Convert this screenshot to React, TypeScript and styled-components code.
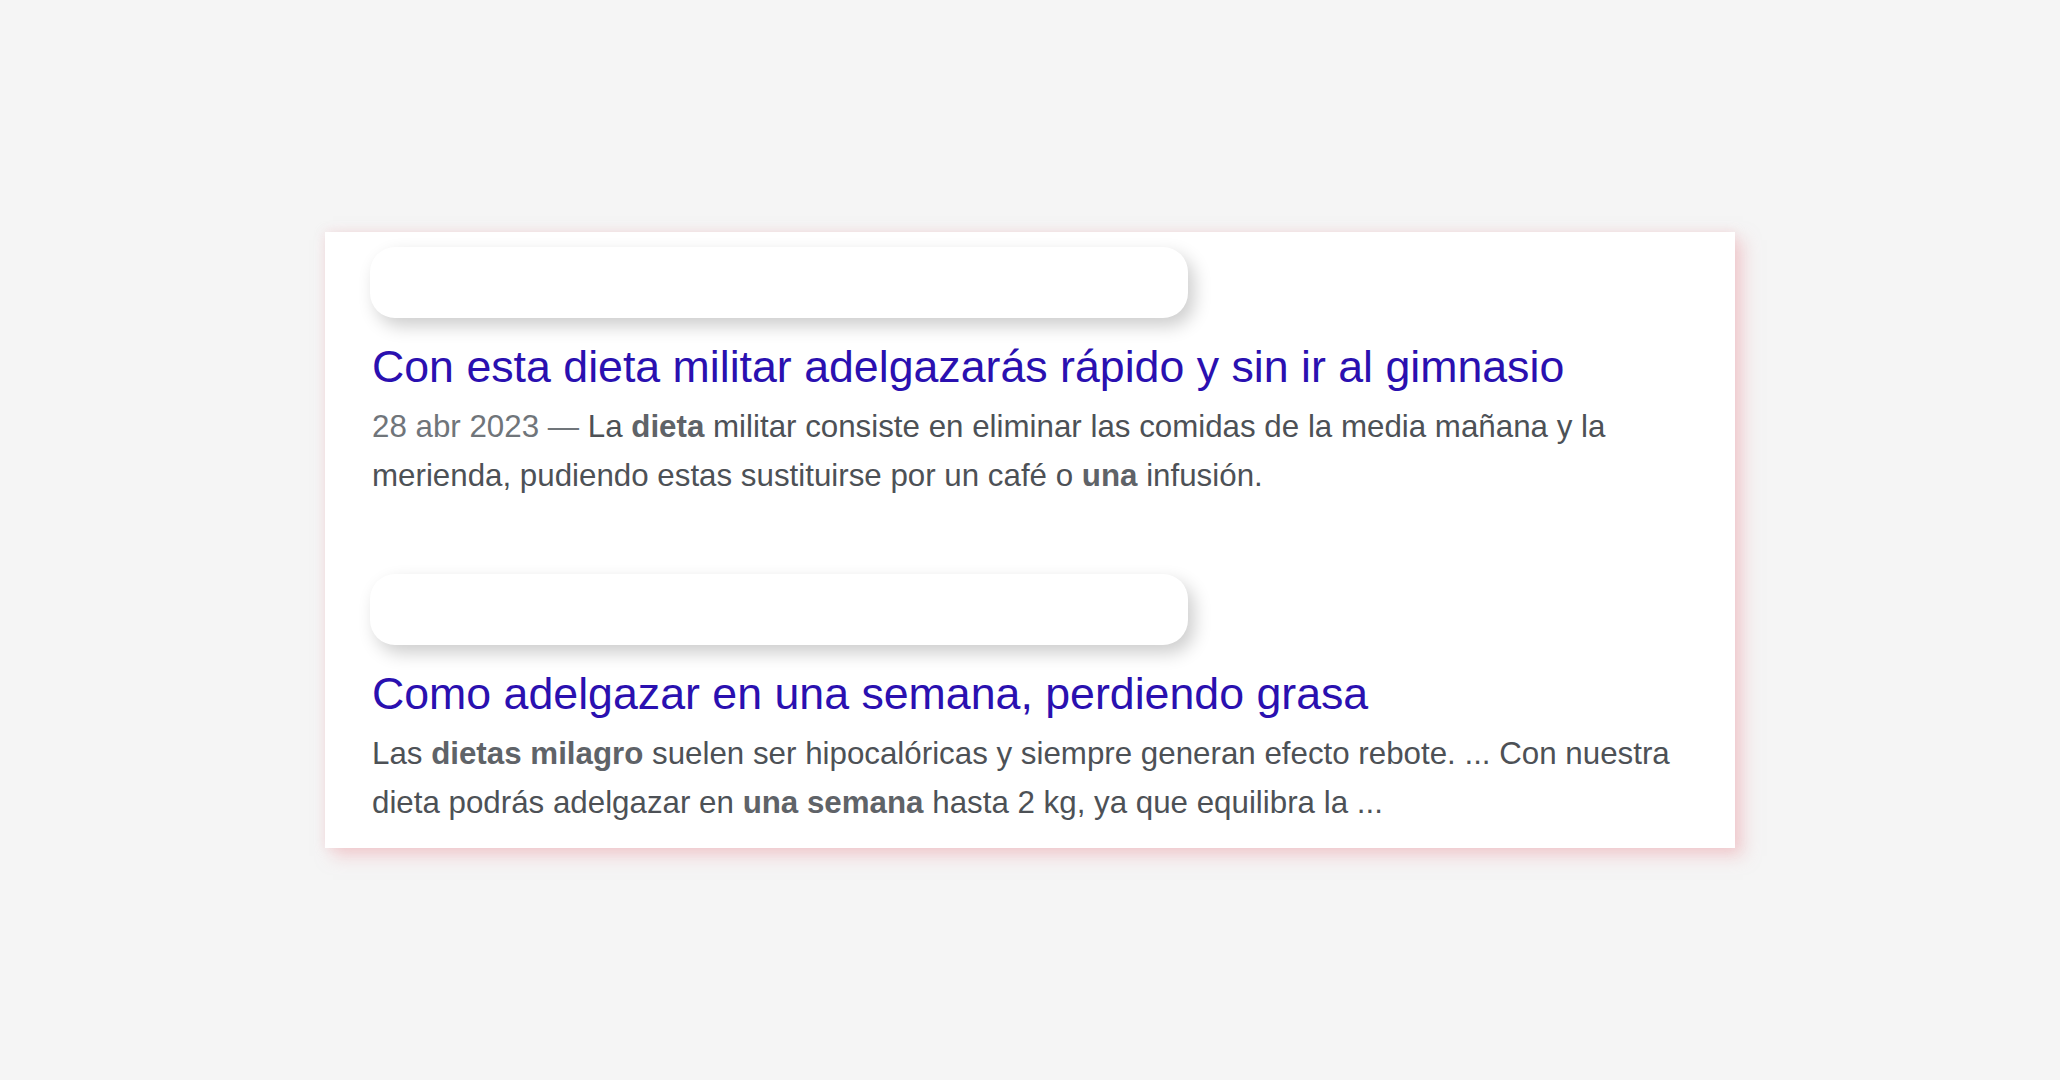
import styled, { createGlobalStyle } from "styled-components";

const GlobalStyle = createGlobalStyle`
  * { box-sizing: border-box; }
  body {
    margin: 0;
    background: #f5f5f5;
    font-family: "Liberation Sans", Arial, sans-serif;
  }
`;

type Part = { text: string; bold?: boolean };

type Result = {
  title: string;
  date?: string;
  snippet: Part[];
};

const results: Result[] = [
  {
    title: "Con esta dieta militar adelgazarás rápido y sin ir al gimnasio",
    date: "28 abr 2023 — ",
    snippet: [
      { text: "La " },
      { text: "dieta", bold: true },
      { text: " militar consiste en eliminar las comidas de la media mañana y la merienda, pudiendo estas sustituirse por un café o " },
      { text: "una", bold: true },
      { text: " infusión." },
    ],
  },
  {
    title: "Como adelgazar en una semana, perdiendo grasa",
    snippet: [
      { text: "Las " },
      { text: "dietas milagro", bold: true },
      { text: " suelen ser hipocalóricas y siempre generan efecto rebote. ... Con nuestra dieta podrás adelgazar en " },
      { text: "una semana", bold: true },
      { text: " hasta 2 kg, ya que equilibra la ..." },
    ],
  },
];

export default function App() {
  return (
    <>
      <GlobalStyle />
      <Page>
        <Card>
          {results.map((r) => (
            <ResultItem key={r.title}>
              <Pill />
              <Title href="#">{r.title}</Title>
              <Snippet>
                {r.date && <DateText>{r.date}</DateText>}
                {r.snippet.map((p, i) =>
                  p.bold ? <Em key={i}>{p.text}</Em> : <span key={i}>{p.text}</span>
                )}
              </Snippet>
            </ResultItem>
          ))}
        </Card>
      </Page>
    </>
  );
}

const Page = styled.main`
  display: flex;
  justify-content: center;
  align-items: center;
  min-height: 100vh;
`;

const Card = styled.section`
  display: flex;
  flex-direction: column;
  gap: 74px;
  width: 1410px;
  padding: 15px 43px 21px 45px;
  background: #fff;
  box-shadow: 8px 8px 16px rgba(238, 170, 176, 0.5), 0 0 10px rgba(238, 190, 194, 0.35);
`;

const ResultItem = styled.article`
  display: flex;
  flex-direction: column;
`;

const Pill = styled.div`
  width: 818px;
  height: 71px;
  border-radius: 25px;
  background: #fff;
  box-shadow: 6px 8px 18px rgba(0, 0, 0, 0.2);
`;

const Title = styled.a`
  display: block;
  margin: 20px 0 0 2px;
  font-size: 44.7px;
  line-height: 58px;
  color: #2a10b0;
  text-decoration: none;
  white-space: nowrap;
`;

const Snippet = styled.p`
  margin: 6px 0 0 2px;
  font-size: 31.3px;
  line-height: 49px;
  color: #4d5156;
`;

const DateText = styled.span`
  color: #70757a;
`;

const Em = styled.b`
  font-weight: bold;
  color: #5f6368;
`;
